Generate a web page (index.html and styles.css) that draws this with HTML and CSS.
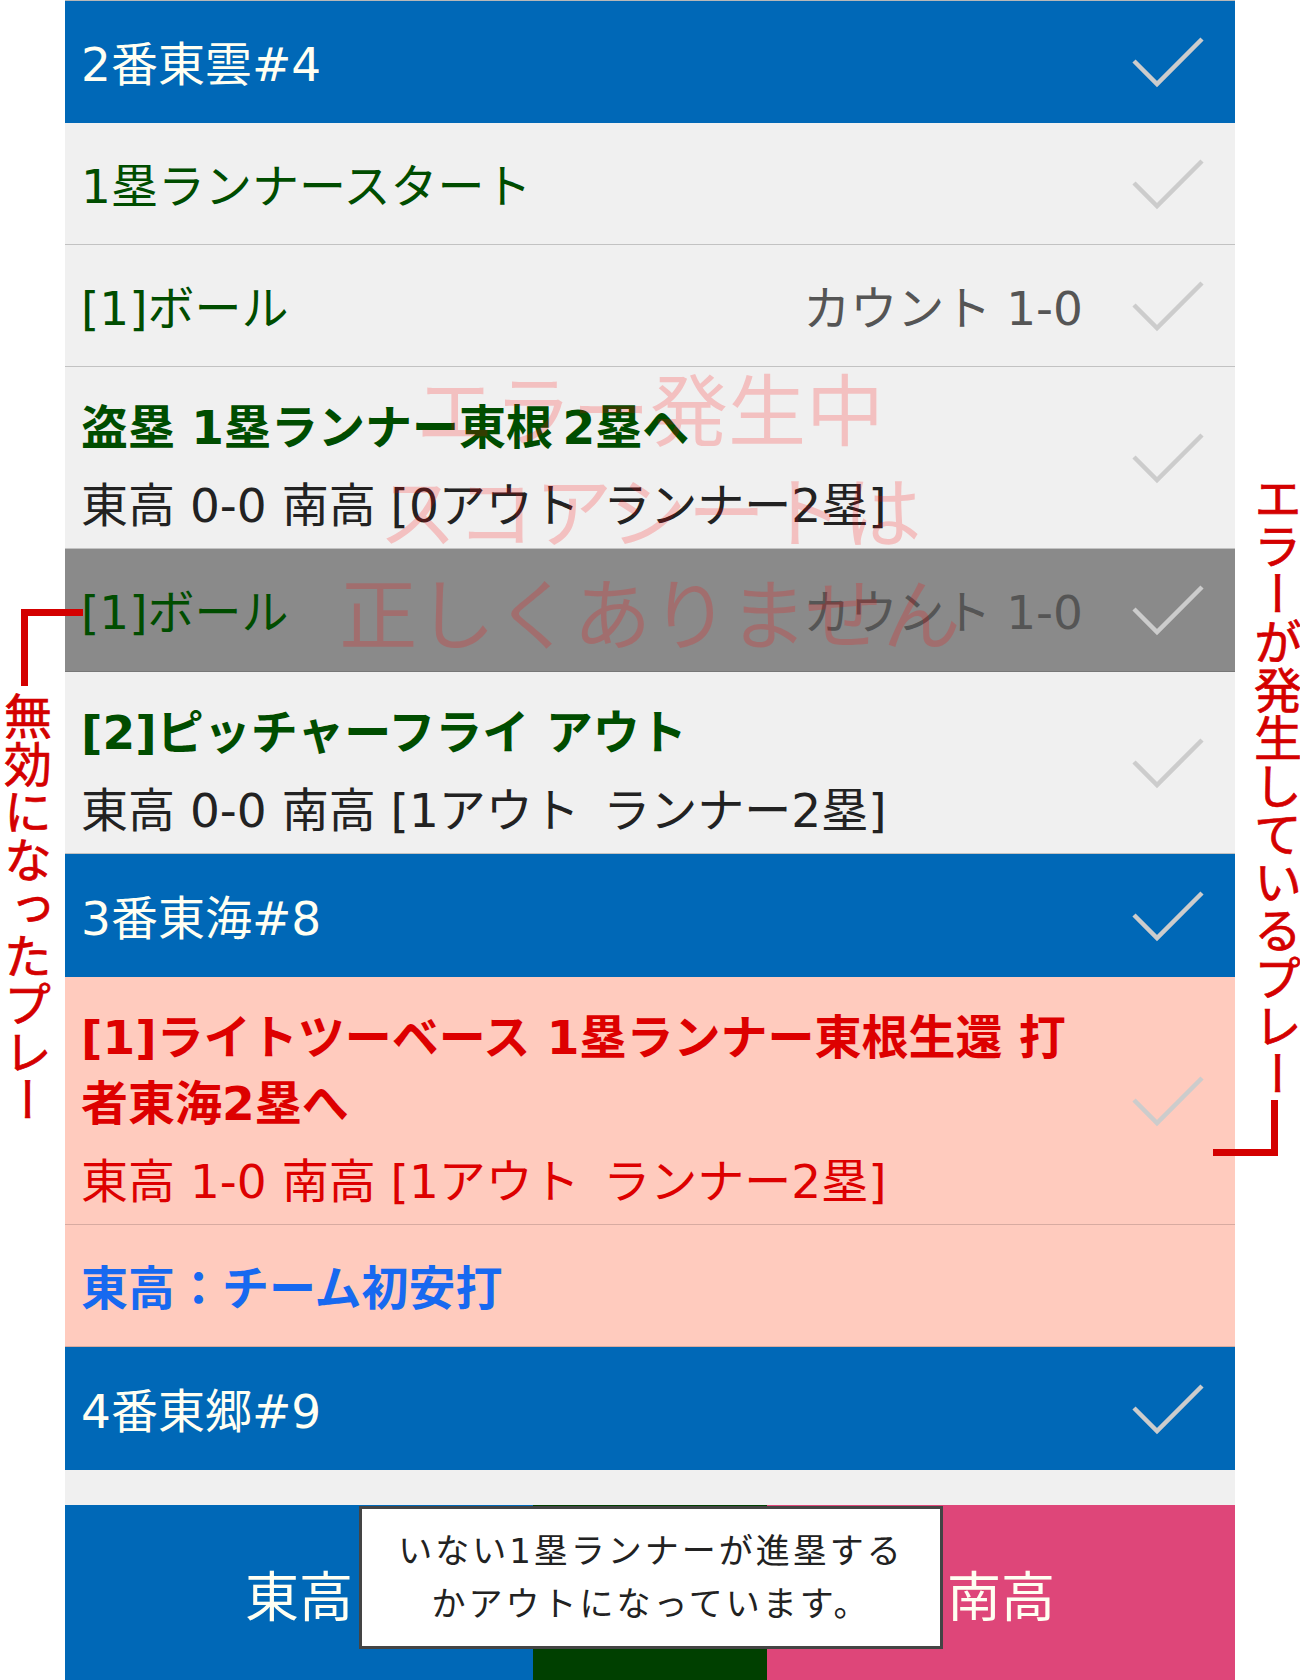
FILE: index.html
```html
<!DOCTYPE html>
<html lang="ja">
<head>
<meta charset="utf-8">
<title>スコアシート</title>
<link rel="stylesheet" href="styles.css">
</head>
<body>
<div class="screen">
  <div class="list">
    <div class="row batter">
      <span class="name">2番東雲#4</span>
      <svg class="check" viewBox="0 0 74 52"><polyline points="3,25 26,48 71,3"/></svg>
    </div>
    <div class="row play">
      <span class="text">1塁ランナースタート</span>
      <svg class="check" viewBox="0 0 74 52"><polyline points="3,25 26,48 71,3"/></svg>
    </div>
    <div class="row play">
      <span class="text">[1]ボール</span>
      <span class="count">カウント 1-0</span>
      <svg class="check" viewBox="0 0 74 52"><polyline points="3,25 26,48 71,3"/></svg>
    </div>
    <div class="row play multi">
      <div class="body">
        <div class="text strong">盗塁 1塁ランナー東根&thinsp;2塁へ</div>
        <div class="score">東高 0-0 南高 [0アウト&ensp;ランナー2塁]</div>
      </div>
      <svg class="check" viewBox="0 0 74 52"><polyline points="3,25 26,48 71,3"/></svg>
    </div>
    <div class="row void">
      <span class="text">[1]ボール</span>
      <span class="count">カウント 1-0</span>
      <svg class="check" viewBox="0 0 74 52"><polyline points="3,25 26,48 71,3"/></svg>
    </div>
    <div class="row play multi">
      <div class="body">
        <div class="text strong">[2]ピッチャーフライ アウト</div>
        <div class="score">東高 0-0 南高 [1アウト&ensp;ランナー2塁]</div>
      </div>
      <svg class="check" viewBox="0 0 74 52"><polyline points="3,25 26,48 71,3"/></svg>
    </div>
    <div class="row batter">
      <span class="name">3番東海#8</span>
      <svg class="check" viewBox="0 0 74 52"><polyline points="3,25 26,48 71,3"/></svg>
    </div>
    <div class="row error multi">
      <div class="body">
        <div class="text strong">[1]ライトツーベース 1塁ランナー東根生還 打<br>者東海2塁へ</div>
        <div class="score">東高 1-0 南高 [1アウト&ensp;ランナー2塁]</div>
      </div>
      <svg class="check" viewBox="0 0 74 52"><polyline points="3,25 26,48 71,3"/></svg>
    </div>
    <div class="row error">
      <span class="note">東高：チーム初安打</span>
    </div>
    <div class="row batter">
      <span class="name">4番東郷#9</span>
      <svg class="check" viewBox="0 0 74 52"><polyline points="3,25 26,48 71,3"/></svg>
    </div>
    <div class="strip"></div>
    <div class="teams">
      <div class="team home">東高</div>
      <div class="team mid"></div>
      <div class="team away">南高</div>
    </div>
  </div>

  <div class="watermark">エラー発生中<br>スコアシートは<br>正しくありません</div>

  <div class="popup">いない1塁ランナーが進塁する<br>かアウトになっています。</div>

  <div class="annot annot-left">
    <span class="br br-lh"></span>
    <span class="br br-lv"></span>
    <span class="vtext vtext-left">無効になったプレー</span>
  </div>
  <div class="annot annot-right">
    <span class="vtext vtext-right">エラーが発生しているプレー</span>
    <span class="br br-rv"></span>
    <span class="br br-rh"></span>
  </div>
</div>
</body>
</html>
```

FILE: styles.css
```css
* { box-sizing: border-box; }

html, body {
  margin: 0;
  padding: 0;
  background: #ffffff;
}

body {
  font-family: "DejaVu Sans", "Noto Sans CJK JP", sans-serif;
  width: 1300px;
  height: 1680px;
  overflow: hidden;
}

.screen {
  position: relative;
  width: 1300px;
  height: 1680px;
}

.list {
  width: 1170px;
  margin: 0 auto;
  border-top: 1px solid #b8b8b8;
}

.row {
  display: flex;
  align-items: center;
  padding-left: 16px;
  font-size: 47px;
  line-height: 66px;
}

.row > .name,
.row > .text,
.row > .count,
.row > .note {
  padding-top: 6px;
}

.row.batter {
  height: 123px;
  background: #0068b7;
  color: #fffff2;
}

.row.batter:first-child {
  height: 122px;
}

.row.play {
  height: 122px;
  background: #f0f0f0;
  border-bottom: 1px solid #c2c2c2;
}

.row.void {
  height: 123px;
  background: #8a8a8a;
  border-bottom: 1px solid #777777;
}

.row.error {
  height: 122px;
  background: #ffcbbe;
  border-bottom: 1px solid #d8aba1;
}

.row.multi {
  height: auto;
}

.body {
  padding: 28px 0 9px;
}

.text {
  color: #004d00;
}

.strong {
  font-weight: 700;
}

.row.error .text {
  color: #dd0000;
}

.score {
  margin-top: 12px;
  color: #222222;
}

.row.error .score {
  color: #dd0000;
}

.note {
  color: #1769f0;
  font-weight: 700;
}

.count {
  margin-left: auto;
  margin-right: 48px;
  color: #555555;
}

.check {
  width: 74px;
  height: 52px;
  margin-left: auto;
  margin-right: 30px;
  flex: none;
}

.count + .check {
  margin-left: 0;
}

.check polyline {
  fill: none;
  stroke: #cccccc;
  stroke-width: 4.5;
}

.strip {
  height: 35px;
  background: #f0f0f0;
}

.teams {
  display: grid;
  grid-template-columns: 2fr 1fr 2fr;
  height: 176px;
}

.team {
  display: flex;
  align-items: center;
  justify-content: center;
  font-size: 54px;
  color: #fffff2;
}

.team.home { background: #0068b7; }
.team.mid { background: #004000; }
.team.away { background: #de4679; }

.watermark {
  position: absolute;
  left: 0;
  top: 362px;
  width: 1300px;
  text-align: center;
  font-size: 78px;
  line-height: 102px;
  color: rgba(255, 0, 0, 0.2);
  pointer-events: none;
}

.popup {
  position: absolute;
  left: 359px;
  top: 1506px;
  width: 584px;
  height: 143px;
  border: 3px solid #444444;
  background: #ffffff;
  display: flex;
  align-items: center;
  justify-content: center;
  text-align: center;
  font-size: 34px;
  line-height: 53px;
  color: #222222;
  letter-spacing: 3px;
}

.annot {
  position: absolute;
  left: 0;
  top: 0;
  width: 0;
  height: 0;
}

.br {
  position: absolute;
  background: #d40000;
}

.br-lh { left: 21px; top: 609px; width: 62px; height: 7px; }
.br-lv { left: 21px; top: 609px; width: 7px; height: 77px; }
.br-rv { left: 1271px; top: 1100px; width: 7px; height: 56px; }
.br-rh { left: 1213px; top: 1149px; width: 65px; height: 7px; }

.vtext {
  position: absolute;
  writing-mode: vertical-rl;
  color: #d40000;
  white-space: nowrap;
  -webkit-text-stroke: 0.7px #d40000;
}

.vtext-left { left: 0; top: 692px; font-size: 48px; line-height: 48px; }
.vtext-right { left: 1250px; top: 474px; font-size: 48px; line-height: 48px; }
```
